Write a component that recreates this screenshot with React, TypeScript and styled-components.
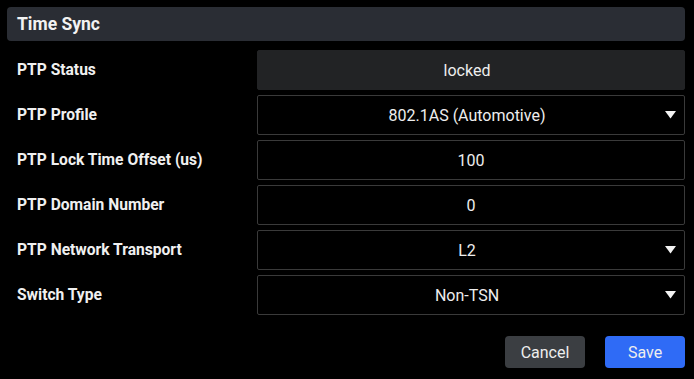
import React from "react";
import styled, { createGlobalStyle } from "styled-components";

const Global = createGlobalStyle`
  html, body { margin: 0; padding: 0; background: #000; }
  body { font-family: Roboto, "Liberation Sans", sans-serif; color: #eee; }
`;

const Page = styled.div`
  padding: 7px 9px 0 7px;
  width: 694px;
  height: 379px;
  box-sizing: border-box;
  background: #000;
`;

const Header = styled.div`
  height: 34px;
  background: #2a2d34;
  border-radius: 4px;
  display: flex;
  align-items: center;
  padding-left: 10px;
  font-size: 17.5px;
  font-weight: 700;
  color: #f2f2f2;
`;

const Form = styled.div`
  display: flex;
  flex-direction: column;
  gap: 5px;
  margin-top: 9px;
`;

const Row = styled.div`
  display: grid;
  grid-template-columns: 250px 1fr;
  align-items: center;
  height: 40px;
`;

const Label = styled.div`
  padding-left: 10px;
  font-size: 15.6px;
  font-weight: 700;
  color: #f0f0f0;
`;

const Field = styled.div<{ $variant: "static" | "input" | "select" }>`
  position: relative;
  height: 40px;
  box-sizing: border-box;
  display: flex;
  align-items: center;
  justify-content: center;
  font-size: 16px;
  color: #eee;
  border-radius: 2px;
  background: ${(p) => (p.$variant === "static" ? "#222325" : "#000")};
  border: 1px solid ${(p) => (p.$variant === "static" ? "#222325" : "#3a3a3a")};
  padding-right: ${(p) => (p.$variant === "input" ? "0" : "8px")};
`;

const Arrow = styled.svg`
  position: absolute;
  right: 8px;
  top: 50%;
  margin-top: -4px;
`;

const Actions = styled.div`
  display: flex;
  justify-content: flex-end;
  gap: 20px;
  margin-top: 21px;
`;

const Button = styled.button<{ $primary?: boolean }>`
  width: 80px;
  height: 32px;
  border: none;
  border-radius: 4px;
  font-family: Roboto, "Liberation Sans", sans-serif;
  font-size: 16px;
  color: #eee;
  background: ${(p) => (p.$primary ? "#2f6bf6" : "#3b3e42")};
`;

type RowDef = { label: string; value: string; variant: "static" | "input" | "select" };

const rows: RowDef[] = [
  { label: "PTP Status", value: "locked", variant: "static" },
  { label: "PTP Profile", value: "802.1AS (Automotive)", variant: "select" },
  { label: "PTP Lock Time Offset (us)", value: "100", variant: "input" },
  { label: "PTP Domain Number", value: "0", variant: "input" },
  { label: "PTP Network Transport", value: "L2", variant: "select" },
  { label: "Switch Type", value: "Non-TSN", variant: "select" },
];

export default function App() {
  return (
    <Page>
      <Global />
      <Header>Time Sync</Header>
      <Form>
        {rows.map((r) => (
          <Row key={r.label}>
            <Label>{r.label}</Label>
            <Field $variant={r.variant}>
              {r.value}
              {r.variant === "select" && (
                <Arrow width="11" height="8" viewBox="0 0 11 8">
                  <path d="M0 0 H11 L5.5 7.5 Z" fill="#f2f2f2" />
                </Arrow>
              )}
            </Field>
          </Row>
        ))}
      </Form>
      <Actions>
        <Button>Cancel</Button>
        <Button $primary>Save</Button>
      </Actions>
    </Page>
  );
}
